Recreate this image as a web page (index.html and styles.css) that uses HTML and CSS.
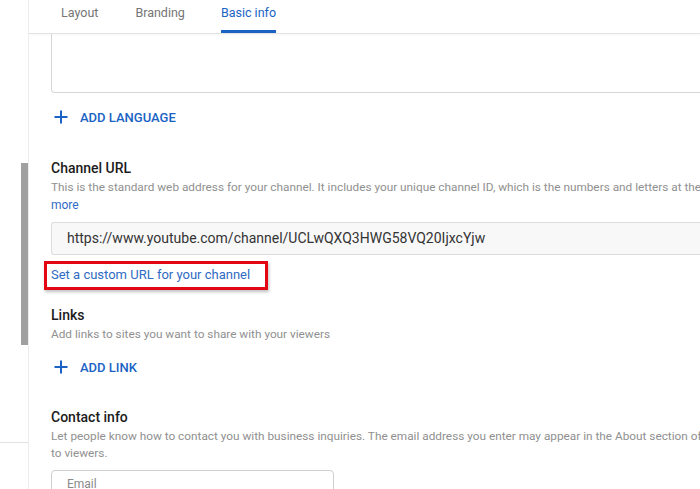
FILE: index.html
```html
<!DOCTYPE html>
<html lang="en">
<head>
    <meta charset="UTF-8">
    <meta name="viewport" content="width=device-width, initial-scale=1.0">
    <title>Channel customization - Basic info</title>
    <link rel="stylesheet" href="styles.css">
</head>
<body>
    <div class="page">
        <div class="sidebar">
            <div class="scrollbar"></div>
            <div class="side-divider"></div>
        </div>

        <div class="main">
            <div class="tabs">
                <div class="tab">Layout</div>
                <div class="tab tab-branding">Branding</div>
                <div class="tab active">Basic info</div>
            </div>

            <div class="content">
                <div class="textarea-box"></div>

                <div class="add-btn add-language">
                    <svg class="plus" viewBox="0 0 14 14" width="14" height="14">
                        <path d="M7 0.5V13.5M0.5 7H13.5" stroke="#1a63c4" stroke-width="2" fill="none"/>
                    </svg>
                    <span>ADD LANGUAGE</span>
                </div>

                <div class="section channel-url">
                    <div class="section-title">Channel URL</div>
                    <div class="section-desc">This is the standard web address for your channel. It includes your unique channel ID, which is the numbers and letters at the end of the URL. Learn</div>
                    <div class="more">more</div>
                    <div class="url-field">https://www.youtube.com/channel/UCLwQXQ3HWG58VQ20IjxcYjw</div>
                    <div class="custom-url">
                        <a href="#" class="custom-link">Set a custom URL for your channel</a>
                        <div class="highlight"></div>
                    </div>
                </div>

                <div class="section links">
                    <div class="section-title">Links</div>
                    <div class="section-desc">Add links to sites you want to share with your viewers</div>
                </div>

                <div class="add-btn add-link">
                    <svg class="plus" viewBox="0 0 14 14" width="14" height="14">
                        <path d="M7 0.5V13.5M0.5 7H13.5" stroke="#1a63c4" stroke-width="2" fill="none"/>
                    </svg>
                    <span>ADD LINK</span>
                </div>

                <div class="section contact">
                    <div class="section-title">Contact info</div>
                    <div class="section-desc wrap">Let people know how to contact you with business inquiries. The email address you enter may appear in the About section of your channel and be visible to viewers.</div>
                    <div class="email-field">Email</div>
                </div>
            </div>
        </div>
    </div>
</body>
</html>
```

FILE: styles.css
```css
body {
    margin: 0;
    font-family: Roboto, "Liberation Sans", Arial, sans-serif;
    background: #fff;
    color: #0f0f0f;
}
.page {
    display: flex;
    width: 700px;
    height: 489px;
    overflow: hidden;
}
.sidebar {
    width: 28px;
    flex-shrink: 0;
    border-right: 1px solid #ececec;
}
.scrollbar {
    margin-top: 163px;
    margin-left: 21px;
    width: 7px;
    height: 182px;
    background: #a0a0a0;
}
.side-divider {
    margin-top: 97px;
    height: 1px;
    background: #e2e2e2;
}
.main {
    flex: 1;
    overflow: hidden;
}
.tabs {
    display: flex;
    height: 33px;
    padding-left: 32px;
    border-bottom: 1px solid #e3e3e3;
    box-shadow: 0 1px 2px rgba(0, 0, 0, 0.04);
    font-size: 12.5px;
    color: #757575;
}
.tab {
    line-height: 25px;
    margin-right: 37px;
    white-space: nowrap;
}
.tab-branding {
    margin-right: 36px;
}
.tab.active {
    color: #1a63c4;
    border-bottom: 3px solid #1a63c4;
    border-radius: 2px 2px 0 0;
    height: 30px;
}
.content {
    padding-left: 22px;
}
.textarea-box {
    width: 700px;
    height: 58px;
    border: 1px solid #d6d6d6;
    border-top: none;
    border-radius: 0 0 0 4px;
}
.add-btn {
    display: flex;
    align-items: center;
    height: 20px;
    padding-left: 3px;
    font-size: 13px;
    font-weight: 500;
    color: #1a63c4;
    white-space: nowrap;
}
.add-btn .plus {
    margin-right: 12px;
}
.add-language {
    margin-top: 14px;
}
.section-title {
    font-size: 14px;
    font-weight: 500;
    color: #1c1c1c;
    line-height: 18px;
}
.section-desc {
    font-size: 11.8px;
    color: #909090;
    line-height: 18px;
    white-space: nowrap;
}
.section-desc.wrap {
    white-space: normal;
    width: 802px;
}
.channel-url {
    margin-top: 32px;
}
.channel-url .section-desc {
    margin-top: 1px;
}
.more {
    font-size: 12px;
    line-height: 18px;
    color: #2f6bc4;
}
.url-field {
    margin-top: 8px;
    height: 33px;
    width: 700px;
    box-sizing: border-box;
    padding-left: 15px;
    line-height: 31px;
    font-size: 14px;
    color: #333;
    background: #f8f8f8;
    border: 1px solid #dcdcdc;
    border-right: none;
    border-radius: 3px 0 0 3px;
    white-space: nowrap;
}
.custom-url {
    position: relative;
    margin-top: 9px;
    height: 18px;
}
.custom-link {
    font-size: 13px;
    line-height: 18px;
    color: #2f6bc4;
    text-decoration: none;
}
.highlight {
    position: absolute;
    left: -7px;
    top: -3px;
    width: 218px;
    height: 23px;
    border: 3px solid #e30613;
    box-shadow: 1px 2px 3px rgba(0, 0, 0, 0.25);
}
.links {
    margin-top: 24px;
}
.links .section-desc {
    margin-top: 1px;
}
.add-link {
    margin-top: 14px;
}
.contact {
    margin-top: 31px;
}
.contact .section-desc {
    margin-top: 2px;
    line-height: 17px;
}
.email-field {
    margin-top: 8px;
    width: 283px;
    height: 34px;
    box-sizing: border-box;
    border: 1px solid #cfcfcf;
    border-radius: 4px;
    padding: 6px 15px;
    font-size: 12px;
    color: #8a8a8a;
}
```
